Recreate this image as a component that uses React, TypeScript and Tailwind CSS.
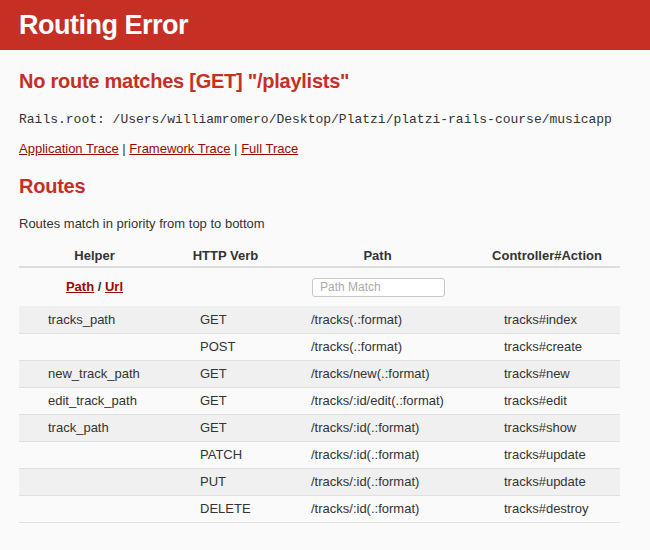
const routes = [
  { helper: "tracks_path", verb: "GET", path: "/tracks(.:format)", action: "tracks#index" },
  { helper: "", verb: "POST", path: "/tracks(.:format)", action: "tracks#create" },
  { helper: "new_track_path", verb: "GET", path: "/tracks/new(.:format)", action: "tracks#new" },
  { helper: "edit_track_path", verb: "GET", path: "/tracks/:id/edit(.:format)", action: "tracks#edit" },
  { helper: "track_path", verb: "GET", path: "/tracks/:id(.:format)", action: "tracks#show" },
  { helper: "", verb: "PATCH", path: "/tracks/:id(.:format)", action: "tracks#update" },
  { helper: "", verb: "PUT", path: "/tracks/:id(.:format)", action: "tracks#update" },
  { helper: "", verb: "DELETE", path: "/tracks/:id(.:format)", action: "tracks#destroy" },
];

export default function App() {
  return (
    <div className="min-h-[550px] bg-[#fafafa] text-[#333] font-['Liberation_Sans',Helvetica,Arial,sans-serif] text-[13px]">
      <header className="h-[50px] bg-[#c52f24] px-[19px] flex items-center">
        <h1 className="text-white font-bold text-[27px] tracking-[-0.5px] leading-none mt-[1px]">Routing Error</h1>
      </header>

      <div className="px-[19px]">
        <h2 className="mt-[19px] text-[#c52f24] font-bold text-[20px] tracking-[-0.25px] leading-[24px]">
          No route matches [GET] "/playlists"
        </h2>
        <p className="mt-[19px] font-['Liberation_Mono','Courier_New',monospace] text-[13px] leading-[16px]">
          Rails.root: /Users/williamromero/Desktop/Platzi/platzi-rails-course/musicapp
        </p>
        <p className="mt-[13px] leading-[16px]">
          <a href="#" className="text-[#980905] underline">Application Trace</a> |{" "}
          <a href="#" className="text-[#980905] underline">Framework Trace</a> |{" "}
          <a href="#" className="text-[#980905] underline">Full Trace</a>
        </p>

        <h2 className="mt-[17px] text-[#c52f24] font-bold text-[20px] tracking-[-0.25px] leading-[24px]">Routes</h2>
        <p className="mt-[18px] leading-[16px]">Routes match in priority from top to bottom</p>

        <table className="mt-[16px] w-[601px] border-collapse">
          <thead>
            <tr className="border-b-2 border-[#dddddd]">
              <th className="w-[151px] font-bold text-center pb-[3px] leading-[15px]">Helper</th>
              <th className="w-[111px] font-bold text-center pb-[3px] leading-[15px]">HTTP Verb</th>
              <th className="w-[193px] font-bold text-center pb-[3px] leading-[15px]">Path</th>
              <th className="w-[146px] font-bold text-center pb-[3px] leading-[15px]">Controller#Action</th>
            </tr>
            <tr>
              <th className="h-[39px] text-center font-bold">
                <a href="#" className="text-[#980905] underline">Path</a> /{" "}
                <a href="#" className="text-[#980905] underline">Url</a>
              </th>
              <th></th>
              <th className="text-left pl-[31px]">
                <input
                  placeholder="Path Match"
                  className="w-[133px] h-[19px] rounded-[3px] border border-[#c8c8c8] bg-white px-[7px] text-[12px] font-normal placeholder:text-[#aaa] outline-none"
                />
              </th>
              <th></th>
            </tr>
          </thead>
          <tbody>
            {routes.map((r, i) => (
              <tr key={i} className={`border-b border-[#e0e0e0] ${i % 2 === 0 ? "bg-[#f0f0f0]" : ""}`}>
                <td className="h-[27px] pl-[29px]">{r.helper}</td>
                <td className="pl-[30px]">{r.verb}</td>
                <td className="pl-[30px]">{r.path}</td>
                <td className="pl-[30px]">{r.action}</td>
              </tr>
            ))}
          </tbody>
        </table>
      </div>
    </div>
  );
}
